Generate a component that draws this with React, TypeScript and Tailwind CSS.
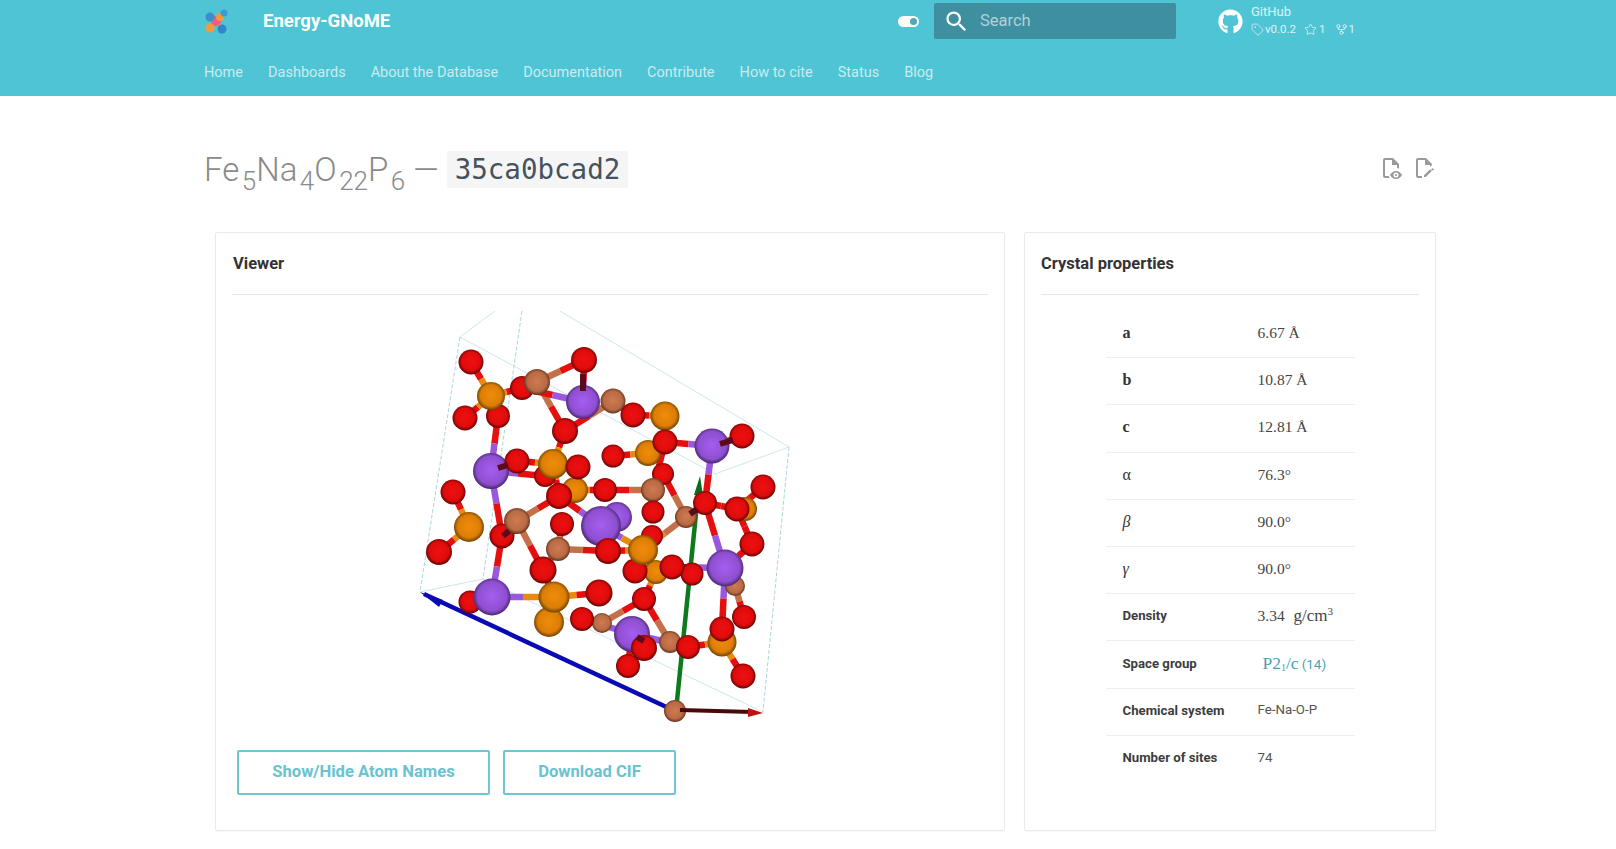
import { Tag, Star, GitFork } from "lucide-react";
import { FaGithub } from "react-icons/fa";
import { MdSearch } from "react-icons/md";

type Kind = "O" | "N" | "F" | "P";

const bondColor: Record<Kind, string> = { O: "#e50f0f", N: "#9a58dc", F: "#c4714a", P: "#e88a0a" };

// painter order, back to front
const atoms: [Kind, number, number, number][] = [
  ["O", 545, 477, 11], ["O", 663, 475, 11], ["O", 652, 537, 11], ["N", 617, 518, 15], ["P", 745, 510, 12],
  ["F", 735, 587, 10], ["P", 656, 573, 12], ["P", 575, 491, 13], ["O", 498, 417, 12], ["O", 522, 389, 12],
  ["P", 491, 397, 14], ["O", 471, 363, 12.5], ["O", 465, 419, 12.5], ["O", 584, 361, 13], ["F", 537, 383, 13],
  ["N", 583, 403, 17], ["F", 613, 402, 12.5], ["O", 633, 416, 12.5], ["P", 665, 417, 14.5], ["O", 565, 432, 13],
  ["P", 648, 454, 13], ["O", 613, 457, 11.5], ["O", 665, 443, 12.5], ["N", 712, 447, 17.5], ["O", 742, 437, 12.5],
  ["N", 491, 472, 18], ["O", 517, 462, 12.5], ["P", 553, 465, 15], ["O", 578, 468, 12.5], ["O", 453, 493, 12.5],
  ["O", 605, 491, 12], ["O", 559, 497, 13], ["F", 653, 491, 12], ["O", 763, 488, 12.5], ["F", 686, 518, 11],
  ["O", 705, 504, 12], ["O", 737, 510, 12.5], ["O", 653, 513, 11.5], ["O", 562, 525, 12], ["P", 469, 528, 15],
  ["O", 502, 537, 12.5], ["F", 517, 522, 13], ["O", 439, 553, 13], ["N", 601, 527, 20], ["F", 558, 550, 12],
  ["O", 608, 552, 13], ["O", 635, 572, 12.5], ["P", 643, 551, 15], ["O", 752, 545, 12.5], ["O", 692, 575, 11.5],
  ["O", 672, 568, 12.5], ["N", 725, 569, 18.5], ["O", 543, 571, 13.5], ["O", 470, 603, 11.5], ["O", 599, 594, 13.5],
  ["N", 492, 598, 18.5], ["P", 549, 623, 15], ["P", 554, 598, 15.5], ["O", 644, 600, 12], ["F", 602, 624, 10],
  ["O", 582, 620, 12], ["O", 744, 618, 12], ["F", 670, 643, 11], ["N", 632, 635, 18], ["O", 628, 667, 12],
  ["P", 722, 643, 14.5], ["O", 722, 630, 12.5], ["O", 688, 648, 12], ["O", 644, 649, 13], ["O", 743, 677, 12.5],
];

const bonds: number[][] = [
  [471, 363, 491, 397], [465, 419, 491, 397], [522, 389, 491, 397], [498, 417, 491, 472], [537, 383, 584, 361],
  [584, 361, 583, 403], [537, 383, 565, 432], [522, 389, 583, 403], [565, 432, 613, 402], [613, 402, 633, 416],
  [633, 416, 665, 417], [742, 437, 712, 447], [665, 443, 712, 447], [665, 443, 653, 491], [613, 457, 648, 454],
  [712, 447, 705, 504], [705, 504, 737, 510], [737, 510, 763, 488], [565, 432, 553, 465], [517, 462, 553, 465],
  [491, 472, 545, 477], [553, 465, 559, 497], [559, 497, 575, 491], [575, 491, 605, 491], [605, 491, 653, 491],
  [653, 491, 663, 475], [653, 491, 653, 513], [663, 475, 686, 518], [559, 497, 517, 522], [559, 497, 601, 527],
  [453, 493, 469, 528], [491, 472, 502, 537], [502, 537, 517, 522], [517, 522, 543, 571], [502, 537, 492, 598],
  [558, 550, 608, 552], [543, 571, 558, 550], [543, 571, 554, 598], [608, 552, 643, 551], [601, 527, 643, 551],
  [686, 518, 643, 551], [705, 504, 725, 569], [672, 568, 725, 569], [725, 569, 722, 630], [735, 587, 744, 618],
  [752, 545, 725, 569], [737, 510, 752, 545], [492, 598, 554, 598], [554, 598, 599, 594], [644, 600, 656, 573],
  [644, 600, 602, 624], [644, 600, 670, 643], [582, 620, 632, 635], [632, 635, 688, 648], [688, 648, 722, 643],
  [722, 643, 743, 677], [632, 635, 628, 667], [562, 525, 558, 550], [469, 528, 439, 553],
];

// dark bond ends that show on top of some atoms
const stubs: number[][] = [
  [583, 375, 583, 392], [720, 445, 733, 441], [498, 469, 508, 466], [503, 537, 509, 532],
  [690, 515, 697, 510], [637, 638, 644, 642],
];

function kindAt(x: number, y: number): Kind {
  let best = atoms[0];
  let dist = Infinity;
  for (const a of atoms) {
    const d = (a[1] - x) ** 2 + (a[2] - y) ** 2;
    if (d < dist) {
      dist = d;
      best = a;
    }
  }
  return best[0];
}

function CrystalViewer() {
  return (
    <svg viewBox="232 305 755 430" className="block w-[755px] h-[430px]">
      <defs>
        <radialGradient id="atom-O" cx="50%" cy="48%" r="52%">
          <stop offset="0%" stopColor="#ee1010" />
          <stop offset="72%" stopColor="#df0b0b" />
          <stop offset="100%" stopColor="#5e0404" />
        </radialGradient>
        <radialGradient id="atom-N" cx="50%" cy="48%" r="52%">
          <stop offset="0%" stopColor="#a45ef0" />
          <stop offset="76%" stopColor="#8f4fd0" />
          <stop offset="100%" stopColor="#46266e" />
        </radialGradient>
        <radialGradient id="atom-F" cx="50%" cy="48%" r="52%">
          <stop offset="0%" stopColor="#cf7a52" />
          <stop offset="72%" stopColor="#b96a44" />
          <stop offset="100%" stopColor="#5e331d" />
        </radialGradient>
        <radialGradient id="atom-P" cx="50%" cy="48%" r="52%">
          <stop offset="0%" stopColor="#f08c0a" />
          <stop offset="72%" stopColor="#dc7e06" />
          <stop offset="100%" stopColor="#6e4203" />
        </radialGradient>
      </defs>

      {/* unit cell */}
      <g fill="none" stroke="#cfe6ea" strokeWidth="1">
        <path d="M460 338 L495 312" />
        <path d="M460 338 L715 475 L789 448 L560 312" />
        <path d="M420 593 L483 580 L763 713" />
        <path d="M460 338 L420 593" stroke="#a9d6e0" strokeDasharray="4 2" />
        <path d="M522 312 L483 580" stroke="#a9d6e0" strokeDasharray="4 2" />
        <path d="M789 448 L763 713" stroke="#a9d6e0" strokeDasharray="4 2" />
      </g>

      {/* axes */}
      <path d="M424 595 L675 712" stroke="#0a0ab4" strokeWidth="4.5" fill="none" />
      <path d="M420 593 L443 601 L439 608 Z" fill="#0a0ab4" />
      <path d="M677 702 L698 495" stroke="#0d7a1c" strokeWidth="4.5" fill="none" />
      <path d="M700 477 L694 496 L703 497 Z" fill="#0d6a18" />

      {bonds.map(([x1, y1, x2, y2], i) => {
        const mx = (x1 + x2) / 2;
        const my = (y1 + y2) / 2;
        return (
          <g key={i} strokeWidth="6.5">
            <line x1={x1} y1={y1} x2={mx} y2={my} stroke={bondColor[kindAt(x1, y1)]} />
            <line x1={mx} y1={my} x2={x2} y2={y2} stroke={bondColor[kindAt(x2, y2)]} />
          </g>
        );
      })}

      {atoms.map(([k, x, y, r], i) => (
        <circle key={i} cx={x} cy={y} r={r} fill={`url(#atom-${k})`} />
      ))}

      {stubs.map(([x1, y1, x2, y2], i) => (
        <line key={i} x1={x1} y1={y1} x2={x2} y2={y2} stroke="#5a0a1a" strokeWidth="6" />
      ))}

      <circle cx="675" cy="712" r="11" fill="url(#atom-F)" />
      <path d="M680 711 L752 713" stroke="#4a0808" strokeWidth="4" fill="none" />
      <path d="M763 714 L748 709 L748 718 Z" fill="#c01010" />
    </svg>
  );
}

function Logo() {
  return (
    <svg viewBox="204 8 26 26" className="w-[26px] h-[26px] shrink-0">
      <path d="M211 14 L222 29 M224 13 L210 28" stroke="#e9a06a" strokeWidth="3" />
      <circle cx="216" cy="21" r="5" fill="#ef5a86" />
      <circle cx="220" cy="17" r="4" fill="#f09a3a" />
      <circle cx="210" cy="17" r="4.5" fill="#3a8fd0" />
      <circle cx="224" cy="13" r="3.5" fill="#3f9ad6" />
      <circle cx="210" cy="28" r="4.5" fill="#f39a3c" />
      <circle cx="222" cy="29" r="4.5" fill="#2f86c8" />
    </svg>
  );
}

function Header() {
  const nav = ["Home", "Dashboards", "About the Database", "Documentation", "Contribute", "How to cite", "Status", "Blog"];
  return (
    <header className="h-[96px] bg-[#4fc4d4] pl-[204px] pr-[180px] text-white">
      <div className="flex items-center h-[42px]">
        <Logo />
        <span className="ml-[33px] pt-[1px] text-[18.5px] font-bold">Energy-GNoME</span>
        <div className="flex-1" />
        <div className="flex justify-end items-center w-[21px] h-[11px] rounded-full bg-white pr-[2px]">
          <div className="w-[7px] h-[7px] rounded-full bg-[#4fa9b8]" />
        </div>
        <div className="flex items-center ml-[15px] w-[242px] h-[36px] rounded-[2px] bg-[#3e8f9f] pl-[9px]">
          <MdSearch size={27} className="text-white" />
          <span className="ml-[10px] pt-[1px] text-[16.5px] text-white/60">Search</span>
        </div>
        <div className="flex items-center ml-[42px] w-[218px]">
          <FaGithub size={25} />
          <div className="ml-[8px] text-white/80">
            <div className="text-[13px] leading-[15px] mb-[3px] -mt-[2px]">GitHub</div>
            <div className="flex items-center text-[11.5px] leading-[14px]">
              <Tag size={13} strokeWidth={1.4} />
              <span className="ml-[1px]">v0.0.2</span>
              <Star size={13} strokeWidth={1.5} className="ml-[8px]" />
              <span className="ml-[2px]">1</span>
              <GitFork size={13} strokeWidth={1.5} className="ml-[9px]" />
              <span className="ml-[1px]">1</span>
            </div>
          </div>
        </div>
      </div>
      <nav className="flex gap-[25px] mt-[21px] text-[14.5px] leading-[20px] text-white/70">
        {nav.map((n) => (
          <span key={n}>{n}</span>
        ))}
      </nav>
    </header>
  );
}

function PageTitle() {
  const sub = "ml-[2.5px] text-[26px] -bottom-[9px]";
  return (
    <div className="flex items-center justify-between h-[37px] mt-[55px]">
      <h1 className="flex items-center text-[33px] font-light text-[#8a8a8a] leading-[37px]">
        <span>
          Fe<sub className={sub}>5</sub>Na<sub className={sub}>4</sub>O<sub className={sub}>22</sub>P<sub className={sub}>6</sub>
        </span>
        <span className="ml-[8px] mr-[8px]">—</span>
        <code className="font-['DejaVu_Sans_Mono',monospace] text-[27.5px] font-normal bg-[#f5f5f5] text-[#46525e] px-[8px] rounded-[2px] leading-[37px]">
          35ca0bcad2
        </code>
      </h1>
      <div className="flex gap-[9px] -mt-[3px] text-[#9a9a9a]">
        <svg viewBox="0 0 24 24" className="w-[24px] h-[24px]" fill="currentColor">
          <path d="M14 2H6a2 2 0 0 0-2 2v16a2 2 0 0 0 2 2h4.8a8 8 0 0 1-1.2-2H6V4h7v5h5v3.1c.7.1 1.4.3 2 .6V8l-6-6z" />
          <path fillRule="evenodd" d="M17 15c-2.7 0-5 1.7-6 4 1 2.3 3.3 4 6 4s5-1.7 6-4c-1-2.3-3.3-4-6-4zm0 6.5a2.5 2.5 0 1 1 0-5 2.5 2.5 0 0 1 0 5zm0-3.5a1 1 0 1 0 0 2 1 1 0 0 0 0-2z" />
        </svg>
        <svg viewBox="0 0 24 24" className="w-[24px] h-[24px]" fill="currentColor">
          <path d="M14 2H6a2 2 0 0 0-2 2v16a2 2 0 0 0 2 2h4v-2H6V4h7v5h5v2l2-2V8l-6-6z" />
          <path d="M21.7 13.35l-1-1a.5.5 0 0 0-.7 0l-.8.8 1.7 1.7.8-.8a.5.5 0 0 0 0-.7zM12 19.25V21h1.75l6.1-6.1-1.75-1.75L12 19.25z" />
        </svg>
      </div>
    </div>
  );
}

function Row({ label, math, children, last }: { label: React.ReactNode; math?: boolean; children: React.ReactNode; last?: boolean }) {
  return (
    <div className={`grid grid-cols-[135px_1fr] items-center h-[47.2px] pl-[17px] pb-[2px] ${last ? "" : "border-b border-[#eeeeee]"}`}>
      <div className={math ? "font-['Liberation_Serif',serif] text-[16px] text-[#333]" : "text-[13.2px] font-bold text-[#3d3d3d]"}>{label}</div>
      <div>{children}</div>
    </div>
  );
}

const mathValue = "font-['Liberation_Serif',serif] text-[15.5px] text-[#444]";

function Properties() {
  return (
    <div className="w-[412px] h-[599px] border border-[#eaeaea] rounded-[2px] shadow-[0_1px_2px_rgba(0,0,0,0.04)] px-[16px]">
      <h3 className="h-[62px] pt-[1px] flex items-center border-b border-[#e6e6e6] text-[16.5px] font-bold text-[#333]">Crystal properties</h3>
      <div className="w-[249px] mx-auto mt-[16px]">
        <Row math label={<b>a</b>}><span className={mathValue}>6.67 Å</span></Row>
        <Row math label={<b>b</b>}><span className={mathValue}>10.87 Å</span></Row>
        <Row math label={<b>c</b>}><span className={mathValue}>12.81 Å</span></Row>
        <Row math label="α"><span className={mathValue}>76.3°</span></Row>
        <Row math label={<i>β</i>}><span className={mathValue}>90.0°</span></Row>
        <Row math label={<i>γ</i>}><span className={mathValue}>90.0°</span></Row>
        <Row label="Density">
          <span className={mathValue}>
            3.34 <span className="ml-[5px] text-[17px]">g/cm<sup className="text-[11px] -top-[6px]">3</sup></span>
          </span>
        </Row>
        <Row label="Space group">
          <span className="block -mt-[1px] ml-[5px] text-[#4a9fb8]">
            <span className="font-['Liberation_Serif',serif] text-[17.5px]">P2<sub className="text-[10px]">1</sub>/c</span>
            <span className="ml-[3px] text-[13.5px]">(14)</span>
          </span>
        </Row>
        <Row label="Chemical system"><span className="block -mt-[1px] text-[13.3px] text-[#555]">Fe-Na-O-P</span></Row>
        <Row last label="Number of sites"><span className="block -mt-[1px] text-[13.3px] text-[#555]">74</span></Row>
      </div>
    </div>
  );
}

function Viewer() {
  const btn = "h-[45px] rounded-[2px] border-2 border-[#6fc6d3] text-[16.6px] font-bold text-[#69c3d1] bg-white";
  return (
    <div className="w-[790px] h-[599px] border border-[#eaeaea] rounded-[2px] shadow-[0_1px_2px_rgba(0,0,0,0.04)] px-[16px]">
      <h3 className="h-[62px] pt-[1px] flex items-center border-b border-[#e6e6e6] pl-[1px] text-[16.5px] font-bold text-[#333]">Viewer</h3>
      <div className="mt-[9px]">
        <CrystalViewer />
      </div>
      <div className="flex gap-[13px] mt-[16px] ml-[5px]">
        <button className={`${btn} w-[253px]`}>Show/Hide Atom Names</button>
        <button className={`${btn} w-[173px]`}>Download CIF</button>
      </div>
    </div>
  );
}

export default function App() {
  return (
    <div className="min-h-[849px] bg-white font-['Roboto',sans-serif] overflow-hidden">
      <Header />
      <main className="pl-[204px] pr-[180px]">
        <PageTitle />
        <div className="flex gap-[19px] mt-[44px] ml-[11px]">
          <Viewer />
          <Properties />
        </div>
      </main>
    </div>
  );
}
